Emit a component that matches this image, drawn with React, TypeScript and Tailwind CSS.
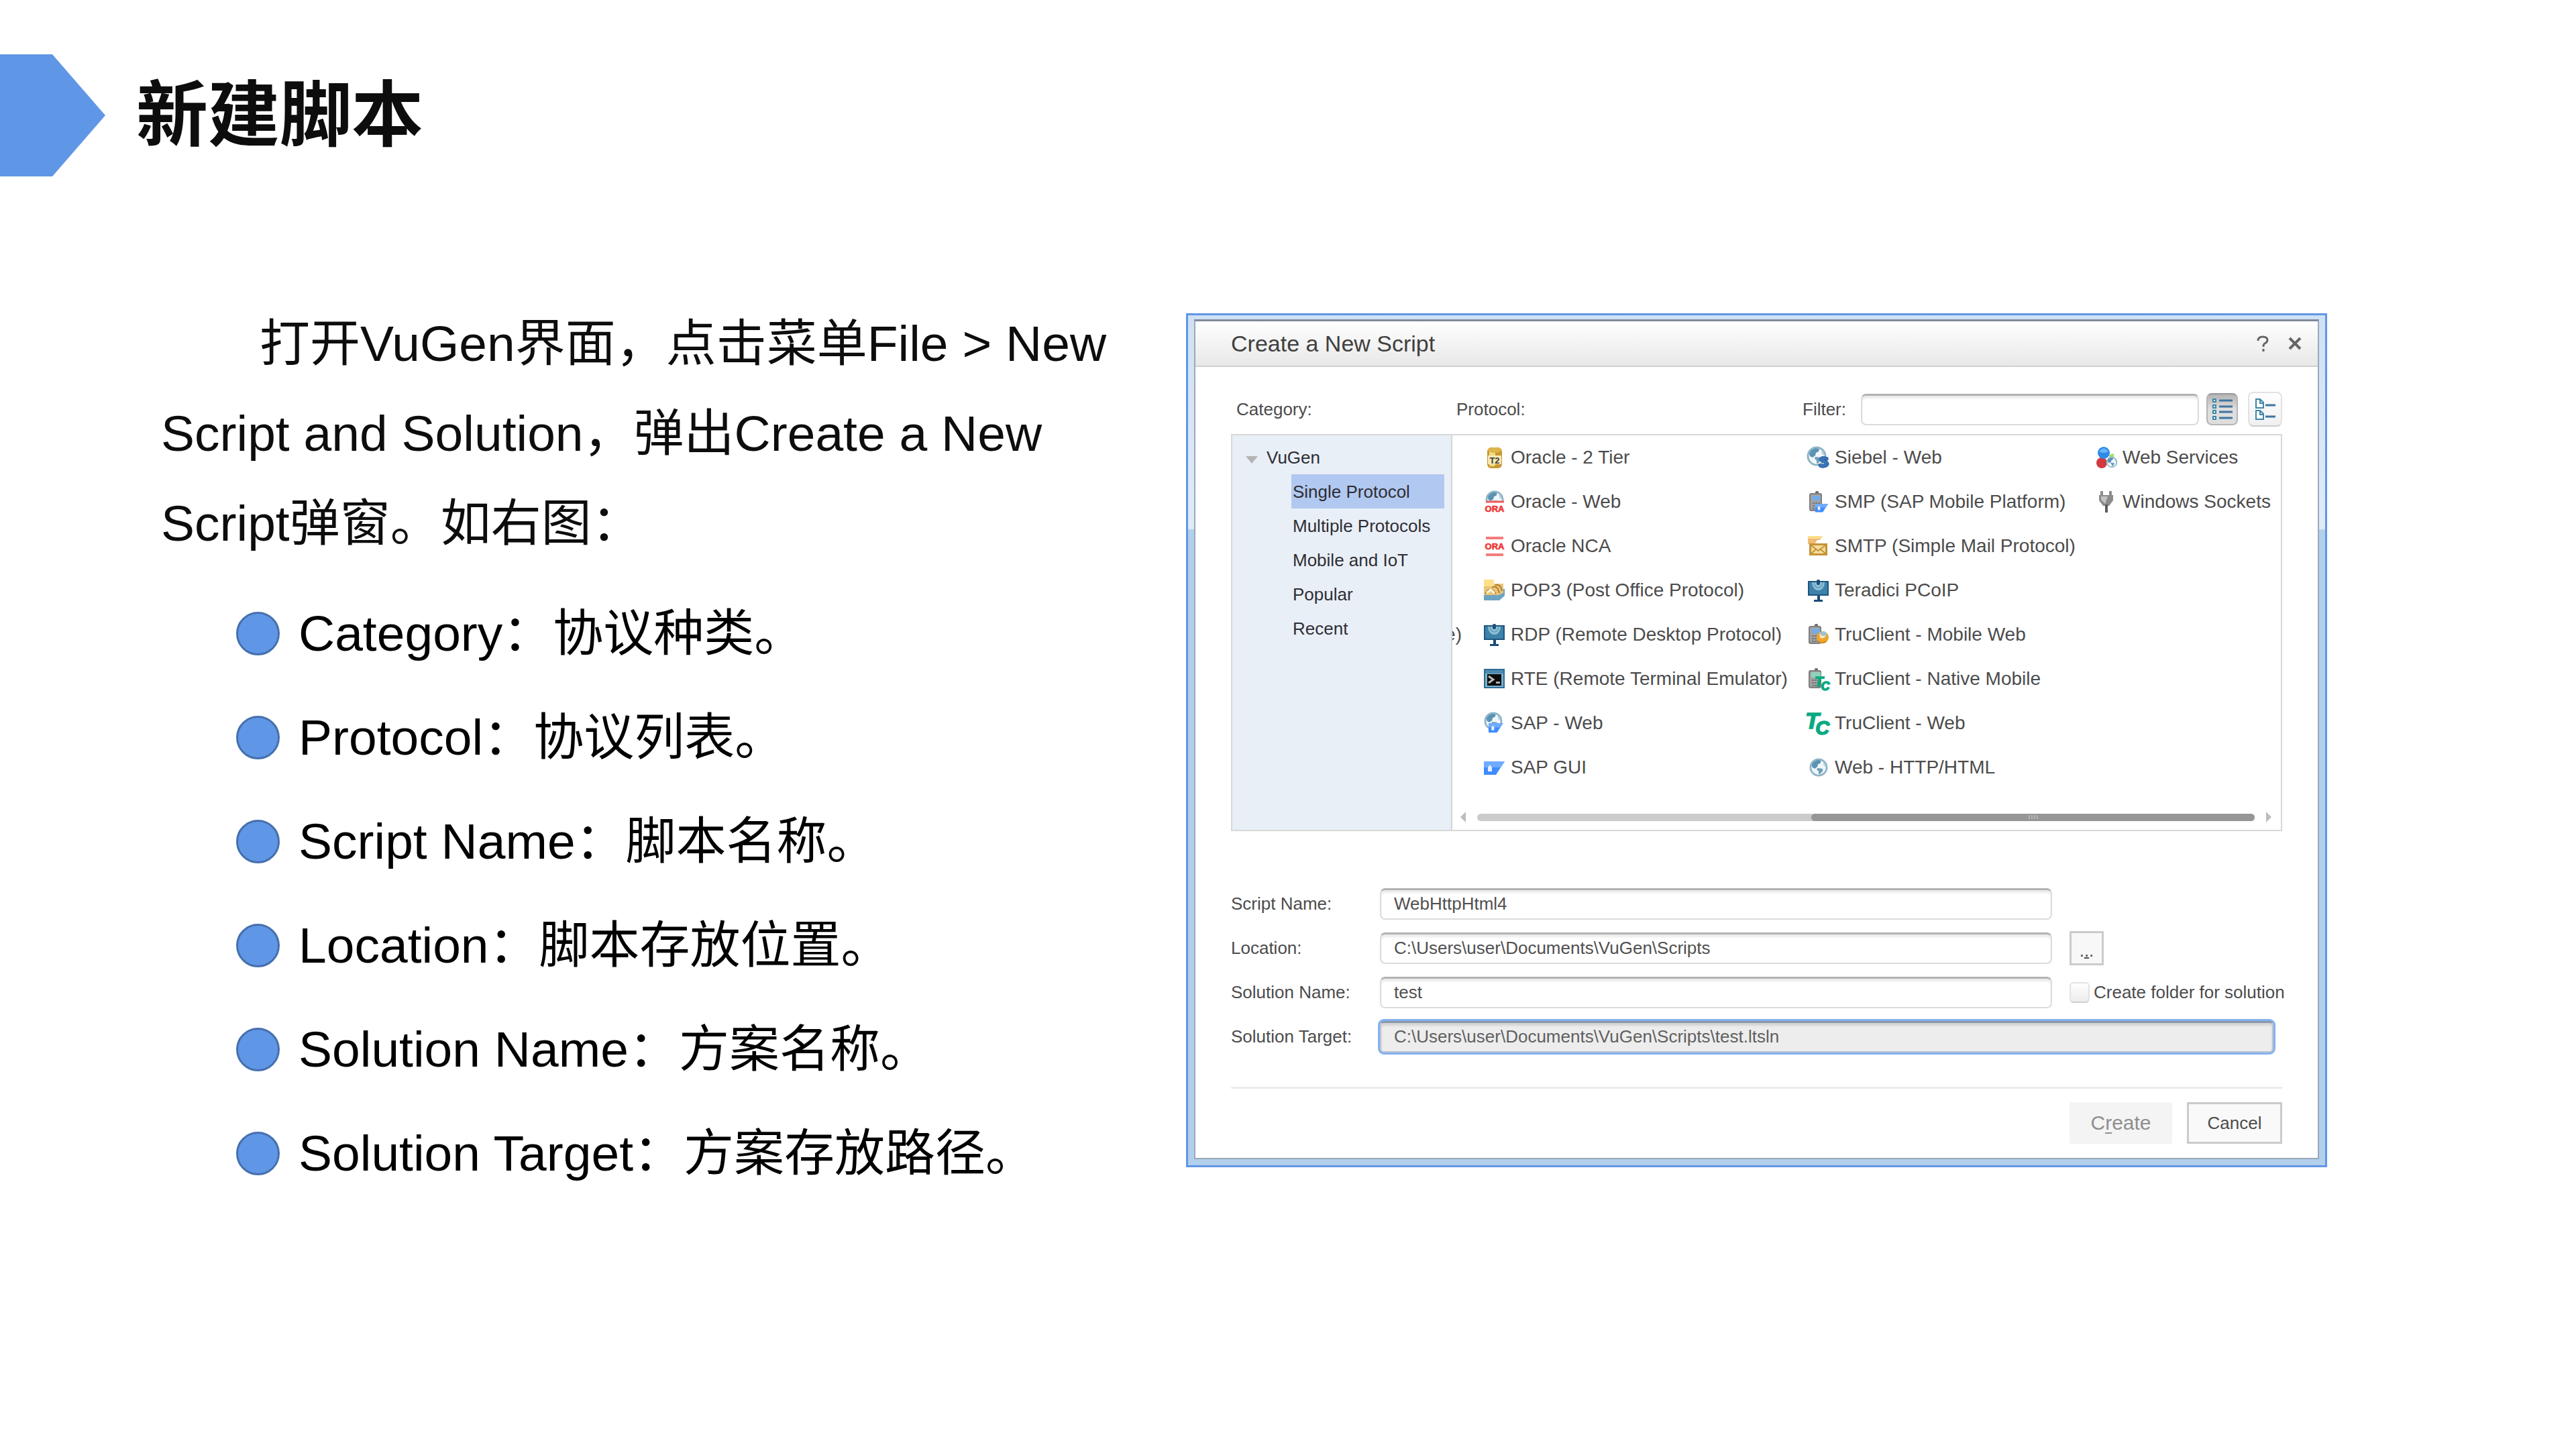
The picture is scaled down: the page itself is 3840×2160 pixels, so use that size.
import React from "react";

type IconProps = { children: React.ReactNode };

const Icon = ({ children }: IconProps) => (
  <svg viewBox="0 0 32 32" className="h-8 w-8 shrink-0 overflow-visible" aria-hidden="true">
    {children}
  </svg>
);

const Globe = ({ cx, cy, r }: { cx: number; cy: number; r: number }) => (
  <g transform={`translate(${cx} ${cy}) scale(${r / 14})`}>
    <circle r="13" fill="#f1f6f9" stroke="#8fb4c8" strokeWidth="3" />
    <path d="M-11 -4 L-8 -9 L-2 -12 L4 -11 L3 -7 L-1 -5 L-2 -1 L-6 2 L-10 0 Z" fill="#5b93b3" />
    <path d="M-2 1 L6 2 L7 5 L2 11 L0 10 L0 6 L-3 4 Z" fill="#6c9fbb" />
    <path d="M7 -9 L11 -5 L11 -1 L8 -3 Z" fill="#b9d2df" />
  </g>
);

const SapMark = ({ x, y, s }: { x: number; y: number; s: number }) => (
  <g transform={`translate(${x} ${y}) scale(${s})`}>
    <path d="M0 0 H31 L18 20 H0 Z" fill="#3f8cff" />
    <path d="M0 0 H31 L25 9 H0 Z" fill="#6fabff" />
    <path d="M9 5 L12 9 V15 H6 V9 Z" fill="#e6f1ff" />
  </g>
);

const Phone = () => (
  <>
    <rect x="10" y="0" width="5" height="5" rx="2" fill="#6a6a6a" />
    <rect x="1" y="3" width="19" height="27" rx="3" fill="#7f7f7f" />
    <rect x="3" y="5" width="15" height="23" rx="2" fill="#a3a3a3" />
    <rect x="6" y="7" width="11" height="7" fill="#73abec" />
    <path d="M6 18h11M6 22h11M6 26h11" stroke="#777" strokeWidth="2" strokeDasharray="3 1" />
  </>
);

const Monitor = () => (
  <Icon>
    <rect x="0" y="2" width="31" height="22" fill="#1f5580" />
    <rect x="2" y="4" width="27" height="18" fill="#3d82a8" />
    <path d="M6 4 A9.500 12 0 0 0 25 4 Z" fill="#8fc0d6" />
    <path d="M9 4 A6.500 8 0 0 0 22 4" fill="none" stroke="#5d9dbd" strokeWidth="1.500" />
    <rect x="13" y="0" width="5" height="8" rx="2" fill="#1c4f7c" />
    <path d="M14 24h4v6h4v3H9v-3h5z" fill="#1b4b78" />
  </Icon>
);

const Ora = ({ y }: { y: number }) => (
  <text x="16" y={y} textAnchor="middle" fontSize="13" fontWeight="700" fill="#ee3b3b" stroke="#ee3b3b" strokeWidth="0.700" fontFamily="Liberation Sans, Arial, sans-serif">
    ORA
  </text>
);

const Tc = ({ x, y, size }: { x: number; y: number; size: number }) => (
  <g fill="#07a981" stroke="#07a981" strokeWidth="1.500" fontFamily="Liberation Sans, Arial, sans-serif" fontWeight="700" fontStyle="italic">
    <text x={x} y={y} fontSize={size}>T</text>
    <text x={x + size * 0.45} y={y + size * 0.27} fontSize={size * 0.85}>C</text>
  </g>
);

const icons = {
  oracle2: (
    <Icon>
      <rect x="5" y="1" width="22" height="31" rx="6" fill="#c9982f" />
      <rect x="8" y="5" width="9" height="24" rx="2" fill="#f3db86" />
      <ellipse cx="16" cy="5" rx="10" ry="4" fill="#dcb54c" />
      <rect x="6" y="13" width="20" height="13" fill="#f7e8b4" />
      <text x="16" y="25" textAnchor="middle" fontSize="13" fontWeight="700" fill="#3b3b33" fontFamily="Liberation Sans, Arial, sans-serif">T2</text>
    </Icon>
  ),
  oracleWeb: (
    <Icon>
      <Globe cx={16} cy={13} r={13} />
      <path d="M0 17h32v15H0z" fill="#fff" />
      <path d="M3 16h27" stroke="#f05a5a" strokeWidth="3" />
      <Ora y={31} />
    </Icon>
  ),
  oracleNca: (
    <Icon>
      <path d="M3 4h26M3 29h26" stroke="#f47c7c" strokeWidth="4" />
      <Ora y={21} />
    </Icon>
  ),
  pop3: (
    <Icon>
      <path d="M0 14 L31 14 V24 L23 31 H0 Z" fill="#6ba3c2" />
      <path d="M0 0 H15 V6 H29 V20 L22 23 H0 Z" fill="#e9c57a" />
      <path d="M0 0 H15 V10 H0 Z" fill="#ffe08a" />
      <path d="M2 21 Q10 8 18 21 M12 12 Q20 7 23 20 M17 8 Q25 6 27 17" fill="none" stroke="#b07d2b" strokeWidth="2" />
      <path d="M4 20 L10 15 L16 20" fill="none" stroke="#fff5d8" strokeWidth="3" />
    </Icon>
  ),
  monitor: <Monitor />,
  rte: (
    <Icon>
      <rect x="0" y="1" width="31" height="29" fill="#2f6c95" />
      <rect x="2" y="3" width="27" height="25" fill="#7db0cb" />
      <rect x="2" y="3" width="27" height="5" fill="#4c8aae" />
      <rect x="5" y="9" width="21" height="17" fill="#0c0c0c" />
      <path d="M7 12 L14 17 L7 22" fill="none" stroke="#b9b9b9" strokeWidth="3" />
      <rect x="18" y="20" width="6" height="3" fill="#b0b0b0" />
    </Icon>
  ),
  sapWeb: (
    <Icon>
      <Globe cx={14} cy={13} r={13} />
      <SapMark x={7} y={16} s={0.7} />
    </Icon>
  ),
  sapGui: (
    <Icon>
      <SapMark x={0} y={7} s={1} />
    </Icon>
  ),
  siebel: (
    <Icon>
      <Globe cx={13} cy={14} r={14} />
      <path d="M30 16 Q18 12 17 19 Q18 23 25 24 Q26 27 16 26 Q15 32 24 31 Q32 30 31 24 Q29 20 24 19 L30 20 Z" fill="#3a74b8" stroke="#275c9f" strokeWidth="1" />
    </Icon>
  ),
  smp: (
    <Icon>
      <g transform="translate(1 0)"><Phone /></g>
      <SapMark x={11} y={19} s={0.62} />
    </Icon>
  ),
  smtp: (
    <Icon>
      <path d="M0 1 H22 L18 7 H14 L10 13 H0 Z" fill="#f0bb74" />
      <path d="M0 1 H22 L19 5 H0 Z" fill="#ffdf8a" />
      <rect x="2" y="12" width="27" height="18" fill="#c69336" />
      <rect x="5" y="15" width="21" height="12" fill="#f3dc9d" />
      <path d="M5 15 L15 23 L26 15 M5 27 L12 21 M26 27 L19 21" fill="none" stroke="#c69336" strokeWidth="2" />
    </Icon>
  ),
  tcMobileWeb: (
    <Icon>
      <Phone />
      <circle cx="22" cy="20" r="9" fill="#f0a52c" />
      <path d="M15 25 Q22 31 29 24 Q27 29 22 29 Q17 29 15 25 Z" fill="#c97a10" />
      <circle cx="23" cy="16" r="5" fill="#9cc3d8" />
      <path d="M17 13 Q20 20 27 17 Q24 23 18 21 Z" fill="#ffe7b0" />
    </Icon>
  ),
  tcNative: (
    <Icon>
      <Phone />
      <rect x="5" y="6" width="14" height="8" fill="#8fd3bb" />
      <Tc x={10} y={27} size={21} />
    </Icon>
  ),
  tcWeb: (
    <Icon>
      <Tc x={-4} y={24} size={34} />
    </Icon>
  ),
  web: (
    <Icon>
      <Globe cx={16} cy={16} r={13} />
    </Icon>
  ),
  webServices: (
    <Icon>
      <circle cx="9" cy="24" r="8" fill="#d03a3f" />
      <circle cx="12" cy="9" r="9" fill="#2e8be6" />
      <path d="M5 7 Q12 -2 19 7 Q12 11 5 7 Z" fill="#69b7fa" />
      <path d="M20 12 L27 10 V15 H20 Z" fill="#a4dd6b" />
      <Globe cx={24} cy={23} r={8} />
    </Icon>
  ),
  sockets: (
    <Icon>
      <path d="M9 0v9M22 0v9" stroke="#8d8d8d" strokeWidth="4" />
      <path d="M5 6 H26 V14 L20 22 H11 L5 14 Z" fill="#8b8b8b" />
      <path d="M8 8 H18 L14 19 L8 13 Z" fill="#c2c2c2" />
      <path d="M16 20v12" stroke="#5c5c5c" strokeWidth="4" />
    </Icon>
  ),
};

const protocols: [React.ReactNode, string][][] = [
  [
    [icons.oracle2, "Oracle - 2 Tier"],
    [icons.oracleWeb, "Oracle - Web"],
    [icons.oracleNca, "Oracle NCA"],
    [icons.pop3, "POP3 (Post Office Protocol)"],
    [icons.monitor, "RDP (Remote Desktop Protocol)"],
    [icons.rte, "RTE (Remote Terminal Emulator)"],
    [icons.sapWeb, "SAP - Web"],
    [icons.sapGui, "SAP GUI"],
  ],
  [
    [icons.siebel, "Siebel - Web"],
    [icons.smp, "SMP (SAP Mobile Platform)"],
    [icons.smtp, "SMTP (Simple Mail Protocol)"],
    [icons.monitor, "Teradici PCoIP"],
    [icons.tcMobileWeb, "TruClient - Mobile Web"],
    [icons.tcNative, "TruClient - Native Mobile"],
    [icons.tcWeb, "TruClient - Web"],
    [icons.web, "Web - HTTP/HTML"],
  ],
  [
    [icons.webServices, "Web Services"],
    [icons.sockets, "Windows Sockets"],
  ],
];

const categories = ["Single Protocol", "Multiple Protocols", "Mobile and IoT", "Popular", "Recent"];

const notes = [
  "Category：协议种类。",
  "Protocol：协议列表。",
  "Script Name：脚本名称。",
  "Location：脚本存放位置。",
  "Solution Name：方案名称。",
  "Solution Target：方案存放路径。",
];

const field =
  "h-[47px] min-w-0 rounded-lg border-2 border-[#dcdcdc] border-t-[3px] border-t-[#b2b2b2] bg-white px-[19px] text-[26px] text-[#505050] shadow-[inset_0_4px_3px_#ececec] outline-none";

function FormRow({ id, label, value, children }: { id: string; label: string; value: string; children?: React.ReactNode }) {
  return (
    <div className="flex h-[66px] items-center">
      <label htmlFor={id} className="w-[222px] shrink-0">{label}</label>
      <input id={id} defaultValue={value} className={`${field} flex-1`} />
      <div className="flex w-[343px] shrink-0 items-center pl-[26px]">{children}</div>
    </div>
  );
}

function Dialog() {
  return (
    <section
      role="dialog"
      aria-labelledby="dialog-title"
      className="mt-[22px] border-[3px] border-[#6096e6] bg-[linear-gradient(to_bottom,#cfe1f4_0,#dfebf7_318px,#b2cfeb_320px,#b2cfeb_100%)] p-[9px] pt-[6px] font-['Liberation_Sans',Arial,sans-serif] text-[26px] leading-none text-[#4c4c4c]"
    >
      <div className="border-2 border-t-[3px] border-[#9aa9ba] border-t-[#7f8b9a] bg-white">
        <header className="flex h-[68px] items-center border-b-2 border-[#d0d0d0] bg-gradient-to-b from-white to-[#e8e8e8] pr-6 pl-[53px]">
          <h2 id="dialog-title" className="flex-1 text-[34px] text-[#404040]">Create a New Script</h2>
          <button aria-label="Help" className="mr-7 h-6 w-5 text-[#666]">
            <svg viewBox="0 0 20 24" className="h-6 w-5" fill="none" stroke="currentColor" strokeWidth="3">
              <path d="M3 8 Q3 2 10 2 Q17 2 17 7 Q17 10 13 12 Q11 13 11 17" />
              <path d="M11 20v4" />
            </svg>
          </button>
          <button aria-label="Close" className="h-6 w-5 text-[#666]">
            <svg viewBox="0 0 20 24" className="h-6 w-5" fill="none" stroke="currentColor" strokeWidth="4">
              <path d="M2 4 L18 20 M18 4 L2 20" />
            </svg>
          </button>
        </header>

        <div className="px-[53px] pt-[37px] pb-[21px]">
          <div className="flex h-[52px] items-center">
            <span className="w-[336px] shrink-0 pl-2">Category:</span>
            <span className="flex-1">Protocol:</span>
            <label htmlFor="filter" className="mr-[22px]">Filter:</label>
            <input id="filter" className={`${field} w-[504px]`} />
            <button aria-label="List view" className="ml-[11px] flex h-12 w-[47px] items-center justify-center rounded-lg border-2 border-[#b5b5b5] border-t-[#999] bg-gradient-to-b from-[#b4b4b4] via-[#dedede] to-[#dedede]">
              <svg viewBox="0 0 32 34" className="h-[34px] w-8" fill="none">
                <path d="M11 4h20M11 13h20M11 21h20M11 30h20" stroke="#3f74a0" strokeWidth="3" />
                <path d="M2 2h4v4H2zM2 11h4v4H2zM2 19h4v4H2zM2 28h4v4H2z" stroke="#3c86a8" strokeWidth="2" fill="#fff" />
              </svg>
            </button>
            <button aria-label="Tree view" className="ml-[15px] flex h-[52px] w-[51px] items-center justify-center rounded-lg border-2 border-[#e2e2e2] border-b-[#cdcdcd] bg-gradient-to-b from-white to-[#f0f0f0]">
              <svg viewBox="0 0 32 34" className="h-[34px] w-8" fill="none">
                <path d="M2 2h6l5 5v8H2zM2 19h6l5 5v8H2z" stroke="#3c86a8" strokeWidth="2" fill="#fff" />
                <path d="M8 2v6h5M8 19v6h5" stroke="#3c86a8" strokeWidth="2" />
                <path d="M16 11h15M16 28h15" stroke="#3f74a0" strokeWidth="3" />
              </svg>
            </button>
          </div>

          <div className="mt-[11px] flex border-2 border-[#d8d8d8]">
            <nav aria-label="Category" className="w-[328px] shrink-0 border-r-2 border-[#d3d6da] bg-[#e9eff7] pt-[7px] text-[#2e2e33]">
              <button aria-expanded="true" className="flex h-[51px] w-full items-center gap-[13px] pl-5">
                <svg viewBox="0 0 18 11" className="mt-2 h-[11px] w-[18px]" aria-hidden="true">
                  <path d="M0 0h18L9 11z" fill="#b3b3b3" />
                </svg>
                VuGen
              </button>
              <ul className="mr-[10px] ml-[88px]">
                {categories.map((name, i) => (
                  <li key={name}>
                    <button className={i === 0 ? "flex h-[51px] w-full items-center bg-[#b1c8f0] pl-[2px] whitespace-nowrap" : "flex h-[51px] w-full items-center pl-[2px] whitespace-nowrap"}>
                      {name}
                    </button>
                  </li>
                ))}
              </ul>
            </nav>

            <div className="min-w-0 flex-1">
              <div className="grid grid-cols-[47px_483fr_429fr_276fr] text-[28px] whitespace-nowrap">
                <div className="flex w-[14px] justify-end overflow-hidden pt-[264px]">
                  <span className="leading-[66px]">e)</span>
                </div>
                {protocols.map((column, c) => (
                  <ul key={c} className="min-w-0">
                    {column.map(([icon, name]) => (
                      <li key={name}>
                        <button className="flex h-[66px] items-center gap-2">
                          {icon}
                          {name}
                        </button>
                      </li>
                    ))}
                  </ul>
                ))}
              </div>
              <div className="mt-[33px] mb-[11px] flex h-4 items-center gap-[17px] pr-[14px] pl-3">
                <button aria-label="Scroll left" className="h-4 w-2">
                  <svg viewBox="0 0 8 16" className="h-4 w-2"><path d="M8 0v16L0 8z" fill="#bdbdbd" /></svg>
                </button>
                <div role="scrollbar" aria-orientation="horizontal" aria-controls="dialog-title" aria-valuenow={100} className="flex h-[11px] flex-1 justify-end rounded-full bg-[#cbcbcb]">
                  <div className="flex w-[57%] items-center justify-center gap-[2px] rounded-full bg-[#969696]">
                    <i className="h-[6px] w-[2px] bg-[#b5b5b5]" />
                    <i className="h-[6px] w-[2px] bg-[#b5b5b5]" />
                    <i className="h-[6px] w-[2px] bg-[#b5b5b5]" />
                    <i className="h-[6px] w-[2px] bg-[#b5b5b5]" />
                  </div>
                </div>
                <button aria-label="Scroll right" className="h-4 w-2">
                  <svg viewBox="0 0 8 16" className="h-4 w-2"><path d="M0 0v16l8-8z" fill="#bdbdbd" /></svg>
                </button>
              </div>
            </div>
          </div>

          <form className="mt-[75px]" onSubmit={(e) => e.preventDefault()}>
            <FormRow id="script-name" label="Script Name:" value="WebHttpHtml4" />
            <FormRow id="location" label="Location:" value="C:\Users\user\Documents\VuGen\Scripts">
              <button type="button" aria-label="Browse" className="h-[51px] w-[51px] border-[3px] border-[#cbcbcb] bg-[#f8f8f8] pt-2">
                .<span className="underline decoration-2">.</span>.
              </button>
            </FormRow>
            <FormRow id="solution-name" label="Solution Name:" value="test">
              <input
                id="create-folder"
                type="checkbox"
                className="h-[31px] w-[30px] shrink-0 appearance-none rounded-md border-2 border-[#e2e2e2] border-b-[#cfcfcf] bg-gradient-to-b from-white to-[#ececec]"
              />
              <label htmlFor="create-folder" className="pl-[6px] whitespace-nowrap">Create folder for solution</label>
            </FormRow>
            <div className="flex h-[66px] items-center pr-[13px]">
              <label htmlFor="solution-target" className="w-[222px] shrink-0">Solution Target:</label>
              <input
                id="solution-target"
                readOnly
                value="C:\Users\user\Documents\VuGen\Scripts\test.ltsln"
                className="h-[47px] min-w-0 flex-1 rounded-md border-2 border-[#bcc4cf] border-t-[3px] border-t-[#8c98a8] bg-[#ededed] px-[19px] text-[26px] text-[#606060] shadow-[inset_0_4px_3px_#d4d4d4] ring-[3px] ring-[#85b1f2] outline-none"
              />
            </div>
            <div className="mt-[42px] flex justify-end gap-[22px] border-t-[3px] border-[#ebebeb] pt-5">
              <button type="submit" className="h-[62px] w-[153px] bg-[#f4f4f4] text-[30px] text-[#8e8e8e]">
                C<span className="underline decoration-2 underline-offset-4">r</span>eate
              </button>
              <button type="button" className="h-[62px] w-[142px] border-[3px] border-[#cbcbcb] bg-[#f9f9f9]">Cancel</button>
            </div>
          </form>
        </div>
      </div>
    </section>
  );
}

export default function App() {
  return (
    <div lang="zh-CN" className="min-h-screen bg-white font-['Liberation_Sans','Noto_Sans_CJK_SC',sans-serif]">
      <header className="flex items-center gap-[46px] pt-[81px]">
        <svg viewBox="0 0 157 182" className="h-[182px] w-[157px]" aria-hidden="true">
          <path d="M0 0H78L157 91L78 182H0Z" fill="#6096e6" />
        </svg>
        <h1 className="text-[107px] leading-[160px] font-bold text-[#0d0d0d]">新建脚本</h1>
      </header>
      <main className="grid grid-cols-[1528fr_1701fr] items-start pt-[182px] pr-[371px] pl-[240px] text-[75px]">
        <div>
          <p className="pr-[60px] indent-[147px] leading-[134px] text-[#0d0d0d]">
            打开VuGen界面，点击菜单File &gt; New Script and Solution，弹出Create a New Script弹窗。如右图：
          </p>
          <ul className="mt-5 pl-28 leading-[155px] text-black">
            {notes.map((note) => (
              <li key={note} className="flex items-center gap-7">
                <span className="h-[65px] w-[65px] shrink-0 rounded-full border-[3px] border-[#4670ae] bg-[#6096e6]" />
                <span>{note}</span>
              </li>
            ))}
          </ul>
        </div>
        <Dialog />
      </main>
    </div>
  );
}
